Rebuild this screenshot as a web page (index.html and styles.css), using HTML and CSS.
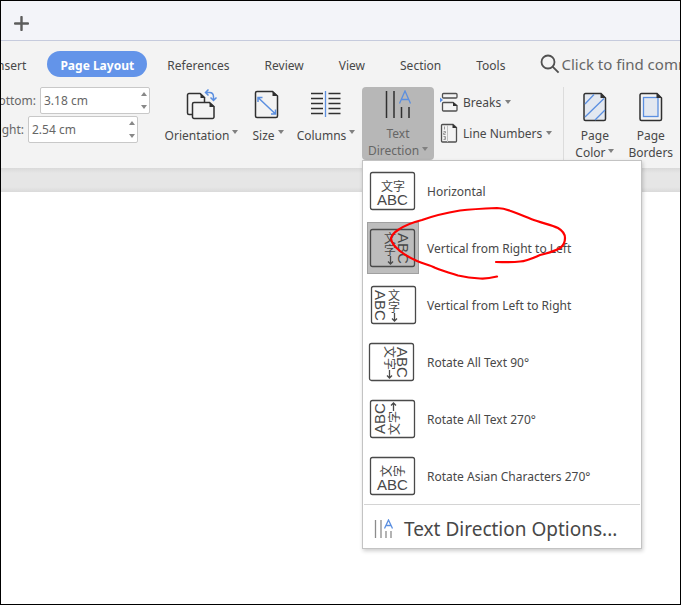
FILE: index.html
```html
<!DOCTYPE html>
<html lang="en">
<head>
  <meta charset="UTF-8">
  <title>Text Direction</title>
  <link rel="stylesheet" href="styles.css">
</head>
<body>
  <div class="window">
    <div class="doc-tabs">
      <button class="new-tab" aria-label="New tab">
        <svg width="15" height="15" viewBox="0 0 15 15"><path d="M7.5 1v13M1 7.5h13" stroke="#5c5c5c" stroke-width="2.4" stroke-linecap="round"/></svg>
      </button>
    </div>

    <div class="ribbon">
      <div class="ribbon-tabs">
        <button class="tab tab-insert">Insert</button>
        <button class="tab active">Page Layout</button>
        <button class="tab">References</button>
        <button class="tab">Review</button>
        <button class="tab">View</button>
        <button class="tab">Section</button>
        <button class="tab">Tools</button>
        <label class="search">
          <svg width="20" height="20" viewBox="0 0 20 20" fill="none" stroke="#505050" stroke-width="1.8"><circle cx="8" cy="8" r="6.5"/><path d="M12.6 12.6l6 6"/></svg>
          <input type="text" placeholder="Click to find commands" aria-label="Click to find commands">
        </label>
      </div>

      <div class="tools">
        <div class="margins">
          <div class="field">
            <label class="field-label bottom" for="margin-bottom">Bottom:</label>
            <div class="spin">
              <input type="text" id="margin-bottom" value="3.18 cm">
              <div class="arrows">
                <button class="up" aria-label="Increase bottom"></button>
                <button class="down" aria-label="Decrease bottom"></button>
              </div>
            </div>
          </div>
          <div class="field">
            <label class="field-label right" for="margin-right">Right:</label>
            <div class="spin">
              <input type="text" id="margin-right" value="2.54 cm">
              <div class="arrows">
                <button class="up" aria-label="Increase right"></button>
                <button class="down" aria-label="Decrease right"></button>
              </div>
            </div>
          </div>
        </div>

        <button class="tool orientation">
          <svg width="32" height="32" viewBox="0 0 32 32" fill="none" stroke="#303030" stroke-width="1.5">
            <path d="M6 25.5H3a1.500 1.500 0 0 1-1.500-1.500V6A1.500 1.500 0 0 1 3 4.500h11l4.500 4v4.500"/>
            <path d="M14.500 4v5H19.500z" fill="#303030" stroke="none"/>
            <path d="M8 13.500H23.500l4.500 4V28a1.500 1.500 0 0 1-1.500 1.500H8A1.500 1.500 0 0 1 6.500 28V15A1.500 1.500 0 0 1 8 13.500z"/>
            <path d="M23.500 13v5h5z" fill="#303030" stroke="none"/>
            <path d="M19.500 3.500h4q4 0 4 4.500v3M22.500 .5l-3 3 3 3M24.500 8.500l3 3 3-3" stroke="#5b8fe0"/>
          </svg>
          <span>Orientation<i class="caret"></i></span>
        </button>
        <button class="tool size">
          <svg width="32" height="32" viewBox="0 0 32 32" fill="none" stroke="#303030" stroke-width="1.5">
            <path d="M5 2.500H20.500l5 4.500V27a1.500 1.500 0 0 1-1.500 1.500H5A1.500 1.500 0 0 1 3.500 27V4A1.500 1.500 0 0 1 5 2.500z"/>
            <path d="M20.500 2v5h5.500z" fill="#303030" stroke="none"/>
            <path d="M6 8.500l17.500 16.500M6 13V8.500h4.500M23.500 20.500V25H19" stroke="#5b8fe0"/>
          </svg>
          <span>Size<i class="caret"></i></span>
        </button>
        <button class="tool columns">
          <svg width="32" height="32" viewBox="0 0 32 32" fill="none" stroke="#303030" stroke-width="1.300">
            <path d="M1 4.500h12M1 9.500h12M1 14.500h12M1 19.500h12M1 24.500h12M18.500 4.500h12M18.500 9.500h12M18.500 14.500h12M18.500 19.500h12M18.500 24.500h12"/>
            <path d="M15.500 2v26" stroke="#5b8fe0"/>
          </svg>
          <span>Columns<i class="caret"></i></span>
        </button>

        <div class="dropdown">
          <button class="tool text-direction">
            <svg width="32" height="30" viewBox="0 0 32 30" fill="none" stroke="#303030" stroke-width="1.500">
              <path d="M4.500 1v27M12 1v27M19.500 17v11M27 17v11"/>
              <path d="M17.500 13.500L23 1l5.500 12.500M19.500 9.500h7" stroke="#5b8fe0" stroke-width="1.300"/>
            </svg>
            <span>Text<br>Direction<i class="caret"></i></span>
          </button>

          <div class="menu">
            <button class="menu-item">
              <svg class="preview" width="52" height="52" viewBox="0 0 52 52">
                <rect x="3.500" y="7.500" width="44" height="37" rx="2"/>
                <text class="cjk" x="14" y="26">文字</text>
                <text class="abc" x="10" y="40">ABC</text>
              </svg>
              Horizontal
            </button>
            <button class="menu-item selected">
              <svg class="preview" width="52" height="52" viewBox="0 0 52 52">
                <rect x="3.500" y="7.500" width="44" height="37" rx="2"/>
                <text class="abc" transform="translate(31 11) rotate(90)">ABC</text>
                <text class="cjk" x="17" y="21">文</text>
                <text class="cjk" x="17" y="33">字</text>
                <path d="M23.500 34v8M21 39.500l2.500 2.500 2.500-2.500"/>
              </svg>
              Vertical from Right to Left
            </button>
            <button class="menu-item">
              <svg class="preview" width="52" height="52" viewBox="0 0 52 52">
                <rect x="4.500" y="7.500" width="44" height="37" rx="2"/>
                <text class="abc" transform="translate(8 11) rotate(90)">ABC</text>
                <text class="cjk" x="21" y="21">文</text>
                <text class="cjk" x="21" y="33">字</text>
                <path d="M27.500 34v8M25 39.500l2.500 2.500 2.500-2.500"/>
              </svg>
              Vertical from Left to Right
            </button>
            <button class="menu-item">
              <svg class="preview" width="52" height="52" viewBox="0 0 52 52">
                <rect x="2.500" y="7.500" width="44" height="37" rx="2"/>
                <text class="abc" transform="translate(30 11) rotate(90)">ABC</text>
                <text class="cjk" transform="translate(18 10) rotate(90)">文字</text>
                <path d="M22.500 34v8M20 39.500l2.500 2.500 2.500-2.500"/>
              </svg>
              Rotate All Text 90°
            </button>
            <button class="menu-item">
              <svg class="preview" width="52" height="52" viewBox="0 0 52 52">
                <rect x="3.500" y="7.500" width="44" height="37" rx="2"/>
                <text class="abc" transform="translate(18 41) rotate(-90)">ABC</text>
                <text class="cjk" transform="translate(32 42) rotate(-90)">文字</text>
                <path d="M26.500 18v-8M24 12.500l2.500-2.500 2.500 2.500"/>
              </svg>
              Rotate All Text 270°
            </button>
            <button class="menu-item">
              <svg class="preview" width="52" height="52" viewBox="0 0 52 52">
                <rect x="3.500" y="7.500" width="44" height="37" rx="2"/>
                <text class="cjk" transform="translate(24 27) rotate(-90)">文</text>
                <text class="cjk" transform="translate(37 27) rotate(-90)">字</text>
                <text class="abc" x="10" y="40">ABC</text>
              </svg>
              Rotate Asian Characters 270°
            </button>
            <button class="menu-options">
              <svg width="20" height="20" viewBox="0 0 20 20" fill="none" stroke="#8c8c8c" stroke-width="1.300">
                <path d="M1.500 1v18M7 1v18M12 12v7M17 12v7"/>
                <path d="M10.500 9.500l4-8.500 4 8.500M12 6.500h5" stroke="#5b8fe0"/>
              </svg>
              Text Direction Options...
            </button>
          </div>
        </div>

        <div class="stack">
          <button class="small-tool">
            <svg width="18" height="20" viewBox="0 0 18 20" fill="none" stroke="#505050" stroke-width="1.300">
              <rect x="2.500" y="1.500" width="14.500" height="4.500" rx="1"/>
              <path d="M3.500 10.500H13l4 3V18a1 1 0 0 1-1 1H3.500a1 1 0 0 1-1-1v-6.500a1 1 0 0 1 1-1z"/>
              <path d="M13 10v4H17.500z" fill="#303030" stroke="none"/>
              <path d="M0 5.500l3 2.500L0 10.500z" fill="#5b8fe0" stroke="none"/>
            </svg>
            <span>Breaks<i class="caret"></i></span>
          </button>
          <button class="small-tool">
            <svg width="18" height="20" viewBox="0 0 18 20" fill="none" stroke="#505050" stroke-width="1.300">
              <path d="M2.500 1.500H13l3.500 3V18a1 1 0 0 1-1 1h-13a1 1 0 0 1-1-1V2.500a1 1 0 0 1 1-1z"/>
              <path d="M12.500 1v4H17z" fill="#303030" stroke="none"/>
              <path d="M7.500 2v17" stroke="#c0c0c0" stroke-width="1"/>
              <path d="M4.500 3.500v3M3.500 8.500h2v1.500h-2v1.500h2M3.500 13.500h2v3h-2M4 15h1.500" stroke="#999" stroke-width="1"/>
            </svg>
            <span>Line Numbers<i class="caret"></i></span>
          </button>
        </div>

        <div class="page-tools">
          <button class="tool">
            <svg width="24" height="30" viewBox="0 0 24 30" fill="none" stroke="#303030" stroke-width="1.500">
              <path d="M2.500 1.500H18l4.500 4.500V27a1.500 1.500 0 0 1-1.500 1.500H2.500A1.500 1.500 0 0 1 1 27V3a1.500 1.500 0 0 1 1.500-1.500z" fill="#e3e8f0"/>
              <path d="M2 12L11 2.500M2 25L21 6.500M12 28l10-10" stroke="#5b8fe0" stroke-width="1.300"/>
              <path d="M17.500 1v5H23z" fill="#303030" stroke="none"/>
            </svg>
            <span>Page<br>Color<i class="caret"></i></span>
          </button>
          <button class="tool">
            <svg width="24" height="30" viewBox="0 0 24 30" fill="none" stroke="#303030" stroke-width="1.500">
              <path d="M2.500 1.500H18l4.500 4.500V27a1.500 1.500 0 0 1-1.500 1.500H2.500A1.500 1.500 0 0 1 1 27V3a1.500 1.500 0 0 1 1.500-1.500z"/>
              <rect x="4.500" y="5.500" width="14.500" height="19" fill="#e3e8f0" stroke="#5b8fe0" stroke-width="1.300"/>
              <path d="M17.500 1v5H23z" fill="#303030" stroke="none"/>
            </svg>
            <span>Page<br>Borders</span>
          </button>
        </div>
      </div>
    </div>

    <div class="canvas-edge"></div>
    <div class="page">
      <svg class="ink" width="208" height="76" viewBox="0 0 208 76" fill="none" stroke="#f00" stroke-width="2.200" stroke-linecap="round">
        <path d="M135 70.500C129 72 124 73 118 72.500C110 72 103 71 96 69.500C88 67 81 65 73 61.700C68 59 62 58 55 55C48 52 43 49 38 45C33 41 29 37 29 32C30 29 33 26 36 24C43 19 52 16 60 14C71 10 83 7 98 4.500C111 3 123 2.500 135 2C141 2 144 3 148 4.700C158 8 166 12 175 15C182 17.500 190 19 196 22C201 25 203 28 203 32C203 37 201 40 198 42C192 46 185 47 178 49C171 52 165 55 158 55.500C150 56.500 142 56 134 56"/>
      </svg>
    </div>
  </div>
</body>
</html>
```

FILE: styles.css
```css
* {
  box-sizing: border-box;
}
body {
  margin: 0;
  font-family: "Noto Sans", "Noto Sans CJK SC", sans-serif;
  font-size: 12px;
  line-height: 17px;
  color: #484848;
}
button, input {
  font: inherit;
  color: inherit;
  border: none;
  background: none;
  padding: 0;
  margin: 0;
}
button {
  cursor: pointer;
  white-space: nowrap;
}
svg {
  display: block;
  flex: none;
}
.window {
  display: flex;
  flex-direction: column;
  min-height: 100vh;
  border: 1px solid #000;
  overflow: hidden;
}
.doc-tabs {
  display: flex;
  align-items: center;
  height: 40px;
  padding: 5px 13px 0;
  background: #f3f4f9;
  border-bottom: 1px solid #c6cbdd;
}

/* ribbon */
.ribbon {
  height: 127px;
  background: #f3f3f3;
}
.ribbon-tabs {
  display: flex;
  align-items: center;
  padding-top: 10px;
}
.tab {
  flex: none;
  height: 26px;
  padding: 2px 35px 0 0;
}
.tab-insert {
  margin-left: -8px;
  padding-right: 21px;
}
.tab.active {
  width: 100px;
  margin-right: 20px;
  padding: 2px 0 0;
  border-radius: 13px;
  background: #6394e9;
  color: #fff;
  font-weight: bold;
}
.search {
  display: flex;
  align-items: center;
  flex: 1;
  gap: 1px;
  min-width: 0;
}
.search input {
  flex: 1;
  min-width: 0;
  font-size: 15px;
  height: 24px;
}
.search input::placeholder {
  color: #666;
  opacity: 1;
}
.tools {
  display: flex;
  align-items: flex-start;
  padding-top: 10px;
}
.margins {
  display: flex;
  flex-direction: column;
  gap: 2px;
  width: 163px;
  color: #666;
}
.field {
  display: flex;
  align-items: center;
}
.field-label {
  display: flex;
  justify-content: flex-end;
  overflow: hidden;
  padding-right: 4px;
}
.field-label.bottom {
  width: 39px;
}
.field-label.right {
  width: 27px;
}
.spin {
  display: flex;
  width: 110px;
  height: 27px;
  border: 1px solid #c8c8c8;
  border-radius: 2px;
  background: #fff;
}
.spin input {
  flex: 1;
  min-width: 0;
  padding-left: 3px;
}
.arrows {
  display: flex;
  flex-direction: column;
  justify-content: space-between;
  padding: 4px 2px;
}
.up, .down {
  border-left: 3px solid transparent;
  border-right: 3px solid transparent;
}
.up {
  border-bottom: 4px solid #888;
}
.down {
  border-top: 4px solid #888;
}
.tool {
  display: flex;
  flex-direction: column;
  align-items: center;
  flex: none;
}
.orientation, .size, .columns {
  padding-top: 2px;
  gap: 6px;
}
.orientation {
  width: 75px;
}
.size {
  width: 34px;
  margin-left: 12px;
}
.columns {
  width: 60px;
  margin-left: 11px;
}
.caret {
  display: inline-block;
  margin-left: 3px;
  vertical-align: 4px;
  border-top: 4px solid #808080;
  border-left: 3px solid transparent;
  border-right: 3px solid transparent;
}
.orientation .caret, .size .caret, .columns .caret {
  vertical-align: 6px;
}
.small-tool .caret {
  margin-left: 4px;
  vertical-align: 3px;
}
.dropdown {
  position: relative;
  margin-left: 6px;
}
.text-direction {
  width: 72px;
  height: 73px;
  padding-top: 3px;
  gap: 5px;
  border-radius: 4px;
  background: #b7b7b7;
  color: #666;
}
.stack {
  display: flex;
  flex-direction: column;
  gap: 11px;
  padding: 5px 0 0 6px;
}
.small-tool {
  display: flex;
  align-items: center;
  gap: 5px;
}
.page-tools {
  display: flex;
  gap: 14px;
  height: 74px;
  margin-left: 11px;
  padding: 5px 0 0 11px;
  border-left: 1px solid #dcdcdc;
}
.page-tools .tool {
  gap: 5px;
}

/* text direction menu */
.menu {
  position: absolute;
  z-index: 1;
  top: 73px;
  left: 0;
  width: 280px;
  border: 1px solid #c3c3c3;
  background: #fff;
  box-shadow: 1px 2px 4px rgba(0, 0, 0, 0.2);
}
.menu-item {
  display: flex;
  align-items: center;
  gap: 8px;
  width: 100%;
  height: 57px;
  padding: 3px 4px 0;
}
.selected .preview {
  background: #bdbdbd;
  outline: 1px solid #a0a0a0;
  outline-offset: -1px;
}
.preview rect, .preview path {
  fill: none;
  stroke: #4a4a4a;
  stroke-width: 1.300;
}
.preview text {
  fill: #484848;
}
.preview .cjk {
  font-family: "Noto Sans CJK SC", sans-serif;
  font-size: 12px;
}
.preview .abc {
  font-family: "Liberation Sans", sans-serif;
  font-size: 15px;
}
.menu-options {
  display: flex;
  align-items: center;
  gap: 10px;
  width: 276px;
  height: 44px;
  margin: 1px 1px 0;
  padding: 5px 10px 0;
  border-top: 1px solid #d4d4d4;
  font-size: 19px;
}

/* document area */
.canvas-edge {
  height: 24px;
  background: linear-gradient(#d9d9d9, #e6e6e6 5px, #e6e6e6 19px, #dadada);
}
.page {
  position: relative;
  flex: 1;
  background: #fff;
}
.ink {
  position: absolute;
  z-index: 2;
  top: 14px;
  left: 361px;
  pointer-events: none;
}
```
